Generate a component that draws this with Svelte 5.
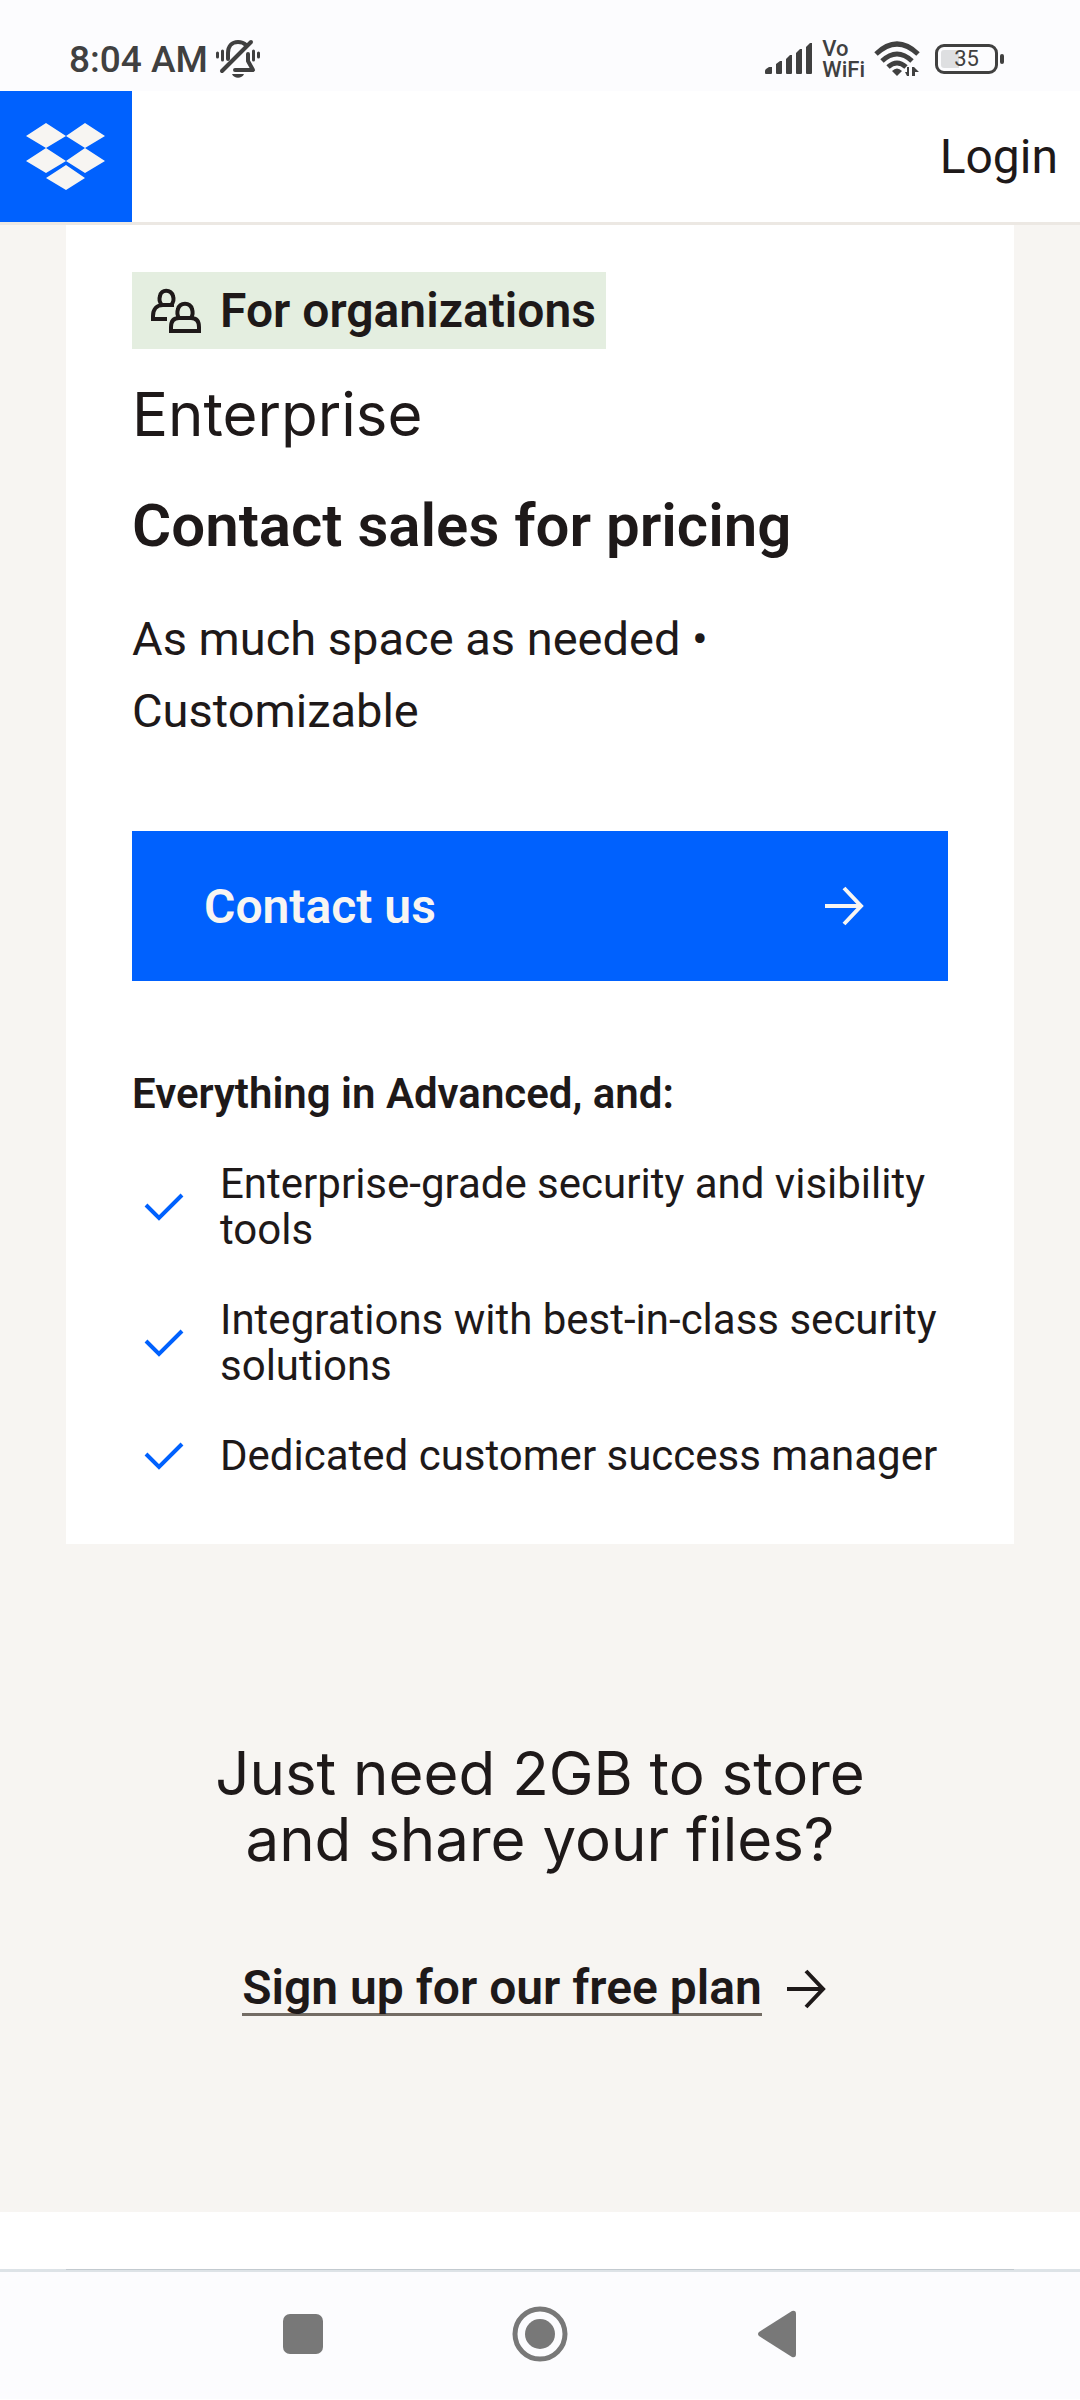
<script lang="ts">
    const features: string[] = [
        "Enterprise-grade security and visibility tools",
        "Integrations with best-in-class security solutions",
        "Dedicated customer success manager",
    ]
</script>

{#snippet arrow()}
    <svg class="arrow" viewBox="0 0 40 40" aria-hidden="true">
        <path d="M1 20H36M20 2L37 20L20 38" />
    </svg>
{/snippet}

<div class="status">
    <div class="group">
        <span class="time">8:04 AM</span>
        <svg class="bell" viewBox="0 0 46 40" aria-hidden="true">
            <path
                class="line"
                d="M13 20V14C13 7 17 3 23 3C27 3 29 4 31 6M33 15V22L38 31H20"
            />
            <path class="line" d="M7 32L36 3" />
            <path class="thin" d="M2.500 14V18M7.500 12V21M38.500 12V21M43.500 14V18" />
            <path d="M17 35H29C27 40 19 40 17 35Z" />
        </svg>
    </div>
    <div class="group right">
        <svg class="signal" viewBox="0 0 48 32" aria-hidden="true">
            <path
                d="M0 30V28Q0 27 1 26L4 24H7V30Q7 31 6 31H1Q0 31 0 30ZM11 30V21L15 18H17V30Q17 31 16 31H12Q11 31 11 30ZM21 30V16L25 12H27V30Q27 31 26 31H22Q21 31 21 30ZM31 30V10L35 6H37V30Q37 31 36 31H32Q31 31 31 30ZM41 30V4L45 0H47V30Q47 31 46 31H42Q41 31 41 30Z"
            />
        </svg>
        <span class="carrier">Vo<br />WiFi</span>
        <svg class="wifi" viewBox="0 0 48 36" aria-hidden="true">
            <path class="arc" d="M2 13Q23 -7 44 13M8 20Q23 6 38 20M14 26Q23 18 32 26" />
            <path d="M18 30Q23 25 28 30L23 35Z" />
            <path d="M35 26V35H33L31 31H33V26ZM38 35V26H40L45 31H41V35Z" />
        </svg>
        <div class="battery">
            <span class="cell"><span class="level">35</span></span>
            <span class="nub"></span>
        </div>
    </div>
</div>

<header>
    <a class="logo" href="#home" aria-label="Dropbox">
        <svg viewBox="0 0 132 131" aria-hidden="true">
            <path
                d="M46 32L66 45L46 57L26 45ZM85 32L105 45L85 57L66 45ZM46 57L66 70L46 82L26 70ZM85 57L105 70L85 82L66 70ZM66 74L85 87L66 99L46 87Z"
            />
        </svg>
    </a>
    <a class="login" href="#login">Login</a>
</header>

<main>
    <article class="card">
        <div class="badge">
            <svg class="people" viewBox="0 0 52 46" aria-hidden="true">
                <path
                    d="M17 31H3V28C3 21 7 17 13 17H24M12 17C9 14 9 11 10 8C11 1 21 1 23 8C24 11 24 14 21 17"
                />
                <path
                    d="M29 30C27 27 27 24 28 21C30 14 40 14 42 21C43 24 43 27 41 30M21 43V39C21 33 24 30 29 30H41C46 30 49 33 49 39V43Z"
                />
            </svg>
            <span>For organizations</span>
        </div>
        <h2>Enterprise</h2>
        <p class="price">Contact sales for pricing</p>
        <p class="space">As much space as needed •<br />Customizable</p>
        <button class="contact">
            <span>Contact us</span>
            {@render arrow()}
        </button>
        <h3>Everything in Advanced, and:</h3>
        <ul>
            {#each features as feature}
                <li>
                    <svg class="check" viewBox="0 0 40 28" aria-hidden="true">
                        <path d="M2 12L15 25L38 2" />
                    </svg>
                    <span>{feature}</span>
                </li>
            {/each}
        </ul>
    </article>

    <section class="free">
        <h2>Just need 2GB to store<br />and share your files?</h2>
        <a class="signup" href="#signup">
            <span>Sign up for our free plan</span>
            {@render arrow()}
        </a>
    </section>
</main>

<div class="next"></div>

<nav>
    <button aria-label="Recent apps">
        <svg viewBox="0 0 60 60" aria-hidden="true">
            <rect x="10" y="10" width="40" height="40" rx="7" />
        </svg>
    </button>
    <button aria-label="Home">
        <svg viewBox="0 0 60 60" aria-hidden="true">
            <circle class="ring" cx="30" cy="30" r="25" />
            <circle cx="30" cy="30" r="15" />
        </svg>
    </button>
    <button aria-label="Back">
        <svg viewBox="0 0 60 60" aria-hidden="true">
            <path
                d="M12 28L45 7Q49 6 49 10V50Q49 54 45 53L12 32Q10 30 12 28Z"
            />
        </svg>
    </button>
</nav>

<style>
    :global(body) {
        background-color: #ffffff;
        color: #1e1919;
        font-family: Roboto, "Liberation Sans", sans-serif;
        font-size: 48px;
    }

    h2,
    h3,
    p,
    ul {
        margin: 0;
        padding: 0;
    }

    a {
        color: inherit;
        text-decoration: none;
    }

    button {
        border: none;
        font: inherit;
        cursor: pointer;
    }

    svg {
        display: block;
        flex-shrink: 0;
    }

    .status {
        display: flex;
        justify-content: space-between;
        align-items: center;
        height: 64px;
        padding: 27px 76px 0 69px;
        background-color: #fcfcfe;
        color: #404040;
        fill: #404040;
    }

    .group {
        display: flex;
        align-items: center;
        gap: 7px;
    }

    .right {
        gap: 9px;
    }

    .time {
        font-size: 37px;
        font-weight: 500;
    }

    .bell {
        width: 46px;
        height: 40px;
    }

    .line,
    .thin,
    .arc {
        fill: none;
        stroke: #404040;
        stroke-width: 4;
        stroke-linecap: round;
        stroke-linejoin: round;
    }

    .thin {
        stroke-width: 3;
    }

    .arc {
        stroke-width: 5;
        stroke-linecap: butt;
    }

    .signal {
        width: 48px;
        height: 32px;
    }

    .carrier {
        font-size: 22px;
        font-weight: 500;
        line-height: 21px;
    }

    .wifi {
        width: 48px;
        height: 36px;
    }

    .battery {
        display: flex;
        align-items: center;
        gap: 2px;
        margin-left: 4px;
    }

    .cell {
        box-sizing: border-box;
        width: 63px;
        height: 30px;
        padding: 3px;
        border: 3px solid #404040;
        border-radius: 9px;
    }

    .level {
        display: block;
        border-radius: 3px;
        background: linear-gradient(to right, #dedfe1 35%, transparent 35%);
        font-size: 22px;
        line-height: 18px;
        text-align: center;
    }

    .nub {
        width: 4px;
        height: 10px;
        border-radius: 2px;
        background-color: #404040;
    }

    header {
        display: flex;
        justify-content: space-between;
        align-items: center;
        padding-right: 22px;
        border-bottom: 3px solid #ece8e3;
        background-color: #ffffff;
    }

    .logo {
        background-color: #0061fe;
        fill: #f7f5f2;
    }

    .logo svg {
        width: 132px;
        height: 131px;
    }

    main {
        padding: 0 66px 196px;
        background-color: #f7f5f2;
    }

    .card {
        padding: 47px 66px 65px;
        background-color: #ffffff;
    }

    .badge {
        display: flex;
        align-items: center;
        gap: 18px;
        width: max-content;
        height: 77px;
        padding: 0 10px 0 18px;
        background-color: #e4eee0;
        font-weight: 600;
    }

    .people {
        width: 52px;
        height: 46px;
        fill: none;
        stroke: #1e1919;
        stroke-width: 4;
    }

    h2 {
        font-family: Inter, sans-serif;
        font-size: 60px;
        font-weight: 400;
        line-height: 66px;
    }

    .card h2 {
        margin-top: 32px;
    }

    .price {
        margin-top: 40px;
        font-size: 60px;
        font-weight: 600;
        line-height: 78px;
    }

    .space {
        margin-top: 38px;
        font-size: 47px;
        line-height: 72px;
    }

    .contact {
        display: flex;
        justify-content: space-between;
        align-items: center;
        width: 100%;
        height: 150px;
        margin-top: 84px;
        padding: 0 84px 0 72px;
        background-color: #0061fe;
        color: #f7f5f2;
        font-weight: 600;
    }

    .arrow {
        width: 40px;
        height: 40px;
        fill: none;
        stroke: currentColor;
        stroke-width: 4;
    }

    h3 {
        margin-top: 90px;
        font-size: 42px;
        font-weight: 600;
        line-height: 46px;
    }

    ul {
        display: flex;
        flex-direction: column;
        gap: 44px;
        margin-top: 44px;
        list-style: none;
    }

    li {
        display: flex;
        align-items: center;
        gap: 36px;
        padding-left: 12px;
        font-size: 42px;
        line-height: 46px;
    }

    .check {
        width: 40px;
        height: 28px;
        fill: none;
        stroke: #0061fe;
        stroke-width: 4;
    }

    .free {
        display: flex;
        flex-direction: column;
        align-items: center;
        gap: 90px;
        padding-top: 196px;
        text-align: center;
    }

    .signup {
        display: flex;
        align-items: center;
        gap: 24px;
        padding-right: 12px;
        font-weight: 600;
    }

    .signup span {
        border-bottom: 3px solid #736c64;
        line-height: 51px;
    }

    .next {
        position: relative;
        height: 57px;
        margin: 0 66px -1px;
        border-bottom: 1px solid #c3cacf;
    }

    nav {
        display: flex;
        justify-content: center;
        gap: 177px;
        padding: 32px 0 35px;
        border-top: 3px solid #dde3e7;
        background-color: #fcfcfe;
    }

    nav button {
        padding: 0;
        background: none;
    }

    nav svg {
        width: 60px;
        height: 60px;
        fill: #787878;
    }

    .ring {
        fill: none;
        stroke: #787878;
        stroke-width: 5;
    }
</style>
